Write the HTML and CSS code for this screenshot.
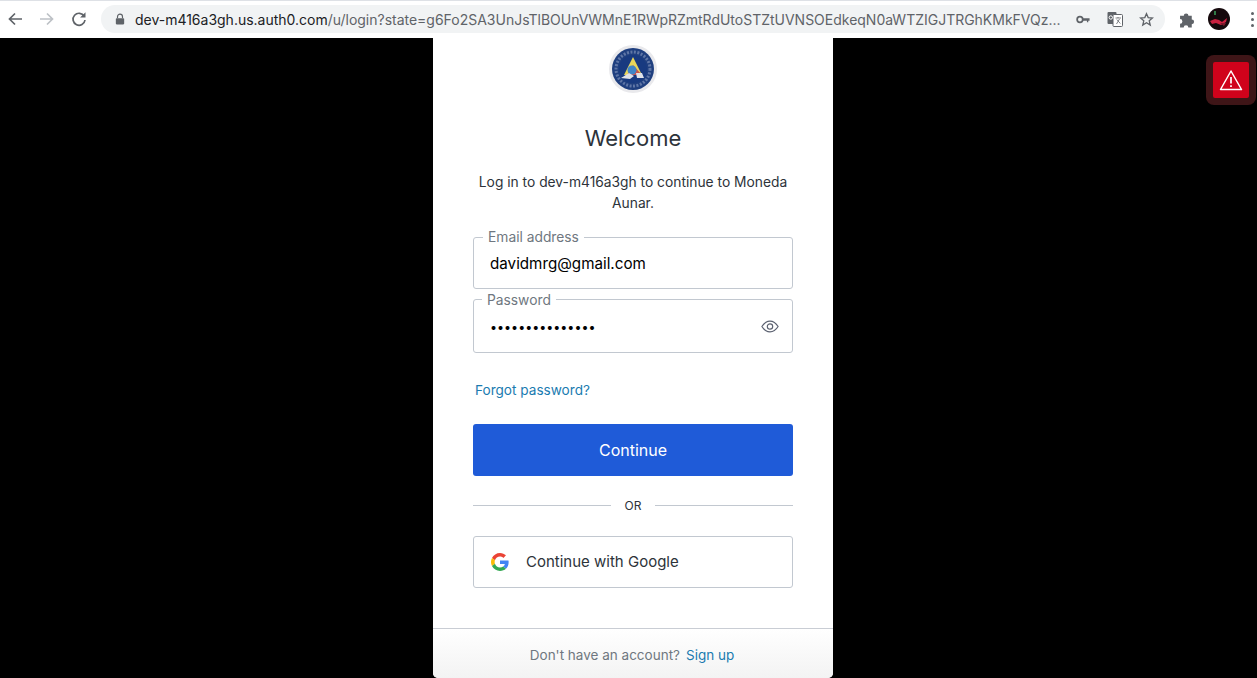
FILE: index.html
```html
<!DOCTYPE html>
<html lang="en">
<head>
    <meta charset="UTF-8">
    <title>Log in | Moneda Aunar</title>
    <link rel="stylesheet" href="styles.css">
</head>
<body>
    <header class="toolbar">
        <div class="nav-buttons">
            <svg class="nav-icon" viewBox="0 0 16 16"><path d="M15 8H2.500M8 2.500 2.500 8 8 13.500" fill="none" stroke="#5f6368" stroke-width="1.700"/></svg>
            <svg class="nav-icon" viewBox="0 0 16 16"><path d="M1 8h12.500M8 2.500 13.500 8 8 13.500" fill="none" stroke="#bdc1c6" stroke-width="1.700"/></svg>
            <svg class="nav-icon" viewBox="0 0 16 16"><path d="M13.200 5.200A6 6 0 1 0 14 9" fill="none" stroke="#5f6368" stroke-width="1.700"/><path d="M14.500 1.200v5.400H9.100z" fill="#5f6368"/></svg>
        </div>
        <div class="omnibox">
            <svg class="lock" viewBox="0 0 12 14"><path d="M3 6V4.200a3 3 0 0 1 6 0V6" fill="none" stroke="#5f6368" stroke-width="1.400"/><rect x="1" y="6" width="10" height="7.500" rx="1" fill="#5f6368"/></svg>
            <div class="url"><span class="url-host">dev-m416a3gh.us.auth0.com</span>/u/login?state=g6Fo2SA3UnJsTlBOUnVWMnE1RWpRZmtRdUtoSTZtUVNSOEdkeqN0aWTZIGJTRGhKMkFVQz...</div>
            <svg class="key" viewBox="0 0 16 10"><circle cx="4.500" cy="5" r="3.200" fill="none" stroke="#5f6368" stroke-width="2"/><path d="M7.500 3.700H15.500V6.300H14V8H12.500V6.300H7.500z" fill="#5f6368"/></svg>
            <svg class="translate" viewBox="0 0 16 16"><rect x="0.500" y="1" width="9" height="12" rx="1" fill="#5f6368"/><rect x="6" y="3.500" width="9.500" height="12" rx="1" fill="#fff" stroke="#5f6368"/><path d="M8.500 7h5.500M11 7v-1M9.500 13l3-5M9.800 8.500l3.500 4" fill="none" stroke="#5f6368" stroke-width=".8"/><circle cx="3.800" cy="6.500" r="1.700" fill="none" stroke="#fff"/></svg>
            <svg class="star" viewBox="0 0 16 16"><path d="M8 1.800 9.800 6l4.600.4-3.500 3 1.100 4.500L8 11.500l-4 2.400 1.100-4.500-3.500-3L6.200 6z" fill="none" stroke="#5f6368" stroke-width="1.400"/></svg>
        </div>
        <svg class="puzzle" viewBox="0 0 16 16"><path d="M1 4.500h3.500a2.200 2.200 0 1 1 4.400 0H12V8a2.200 2.200 0 1 1 0 4.400V15.500H8.800a2.200 2.200 0 1 0-4.400 0H1V12a2.200 2.200 0 1 0 0-4.400z" fill="#5f6368"/></svg>
        <svg class="avatar" viewBox="0 0 22 22"><circle cx="11" cy="11" r="11" fill="#15090c"/><path d="M2 13 7 11l4 1 3 2 5-4-1 4-5 3-5-2-4 1z" fill="#c9203f"/><path d="M6 3h2v4H6z" fill="#2f7a46"/><path d="M12 15l6 0-2 3z" fill="#7c1a2c"/></svg>
        <div class="menu-dots"><span></span><span></span><span></span></div>
    </header>

    <main class="stage">
        <div class="card">
            <svg class="logo" viewBox="0 0 48 48">
                <circle cx="24" cy="24" r="24" fill="#e9e9ec"/>
                <circle cx="24" cy="24" r="21" fill="#1f3f7f"/>
                <circle cx="24" cy="24" r="17" fill="none" stroke="#5f76a6" stroke-width="3" stroke-dasharray="2 1.500"/>
                <circle cx="24" cy="24" r="14" fill="#183a80"/>
                <path d="M24 12 33 30H15z" fill="#e8d65a"/>
                <path d="M24 20 33 30H18z" fill="#c9534f"/>
                <circle cx="23" cy="25" r="4.500" fill="#3f86c8"/>
                <path d="M12 33l8-5 5 3-4 3zM27 28h6l2 5h-7z" fill="#dfe2e8"/>
            </svg>
            <h1 class="title">Welcome</h1>
            <p class="intro">Log in to dev-m416a3gh to continue to Moneda Aunar.</p>

            <div class="field field-email">
                <label class="field-label" for="email">Email address</label>
                <input class="field-input" id="email" type="text" value="davidmrg@gmail.com">
            </div>
            <div class="field field-password">
                <label class="field-label" for="password">Password</label>
                <input class="field-input field-secret" id="password" type="password" value="aaaaaaaaaaaaaaa">
                <svg class="eye" viewBox="0 0 20 14"><path d="M1 7c2.500-4 5.500-6 9-6s6.500 2 9 6c-2.500 4-5.500 6-9 6s-6.500-2-9-6z" fill="none" stroke="#5b6170" stroke-width="1.300"/><circle cx="10" cy="7" r="3" fill="none" stroke="#5b6170" stroke-width="1.300"/></svg>
            </div>

            <a class="forgot" href="#">Forgot password?</a>
            <button class="continue" type="button">Continue</button>

            <div class="divider"><span>OR</span></div>

            <button class="google" type="button">
                <svg class="google-icon" viewBox="0 0 48 48">
                    <path fill="#EA4335" d="M24 9.500c3.900 0 6.900 1.600 9.100 3.600l6.800-6.800C35.800 2.500 30.400 0 24 0 14.600 0 6.500 5.400 2.600 13.200l7.900 6.200C12.400 13.700 17.700 9.500 24 9.500z"/>
                    <path fill="#4285F4" d="M47 24.500c0-1.600-.1-3.100-.4-4.500H24v9h13c-.6 3-2.200 5.500-4.800 7.200l7.700 6c4.500-4.200 7.100-10.300 7.100-17.700z"/>
                    <path fill="#FBBC05" d="M10.500 28.600c-.5-1.400-.8-3-.8-4.600s.3-3.200.8-4.600l-7.900-6.200C.9 16.500 0 20.100 0 24s.9 7.500 2.600 10.800z"/>
                    <path fill="#34A853" d="M24 48c6.500 0 11.900-2.100 15.900-5.800l-7.700-6c-2.100 1.400-4.900 2.300-8.200 2.300-6.300 0-11.600-4.200-13.500-9.900l-7.900 6.200C6.500 42.600 14.600 48 24 48z"/>
                </svg>
                <span class="google-text">Continue with Google</span>
            </button>

            <footer class="card-footer">
                <span>Don't have an account?</span>
                <a href="#">Sign up</a>
            </footer>
        </div>
    </main>

    <div class="alert-badge">
        <div class="alert-inner">
            <svg viewBox="0 0 24 22"><path d="M12 2 22.500 20.500H1.500z" fill="none" stroke="#fff" stroke-width="1.500" stroke-linejoin="round"/><path d="M12 8v6.500M12 16.300v1.700" stroke="#fff" stroke-width="1.700"/></svg>
        </div>
    </div>
</body>
</html>
```

FILE: styles.css
```css
* {
    box-sizing: border-box;
}
html, body {
    height: 100%;
}
body {
    margin: 0;
    font-family: 'Inter', 'Liberation Sans', sans-serif;
    background: #000;
    color: #2d333a;
    overflow: hidden;
    display: flex;
    flex-direction: column;
}

/* browser bar */
.toolbar {
    height: 38px;
    flex: none;
    background: #fff;
    border-top: 1px solid #dee1e6;
    display: flex;
    align-items: center;
    padding: 0 0 1px 7px;
}
.nav-buttons {
    display: flex;
    gap: 16px;
    margin-right: 14px;
}
.nav-icon {
    width: 16px;
    height: 16px;
}
.omnibox {
    width: 1064px;
    height: 28px;
    background: #f1f3f4;
    border-radius: 14px;
    display: flex;
    align-items: center;
    padding-left: 14px;
}
.lock {
    width: 10px;
    height: 12px;
    flex: none;
}
.url {
    margin-left: 10px;
    width: 926px;
    flex: none;
    font-size: 14px;
    letter-spacing: -0.01px;
    color: #5f6368;
    white-space: nowrap;
    overflow: hidden;
}
.url-host {
    color: #202124;
}
.key {
    width: 14px;
    height: 9px;
    margin-left: 15px;
    flex: none;
}
.translate {
    width: 16px;
    height: 16px;
    margin-left: 17px;
    flex: none;
}
.star {
    width: 15px;
    height: 15px;
    margin-left: 16px;
    flex: none;
}
.puzzle {
    width: 17px;
    height: 17px;
    margin-left: 14px;
    flex: none;
}
.avatar {
    width: 22px;
    height: 22px;
    margin-left: 12px;
    flex: none;
}
.menu-dots {
    margin-left: 21px;
    display: flex;
    flex-direction: column;
    gap: 3px;
}
.menu-dots span {
    width: 3px;
    height: 3px;
    border-radius: 50%;
    background: #5f6368;
}

/* login card */
.stage {
    flex: 1;
    display: flex;
    justify-content: center;
    min-height: 0;
    padding-left: 9px;
}
.card {
    width: 400px;
    height: 640px;
    background: #fff;
    border-radius: 0 0 5px 5px;
    padding: 7px 40px 0;
    display: flex;
    flex-direction: column;
}
.logo {
    width: 48px;
    height: 48px;
    align-self: center;
    flex: none;
}
.title {
    margin: 30px 0 0;
    height: 30px;
    font-size: 22px;
    line-height: 30px;
    font-weight: 400;
    text-align: center;
}
.intro {
    margin: 19px 0 0;
    font-size: 13.8px;
    line-height: 21px;
    text-align: center;
}
.field {
    position: relative;
    flex: none;
    border: 1px solid #c2c8d0;
    border-radius: 3px;
}
.field-email {
    height: 52px;
    margin-top: 23px;
}
.field-password {
    height: 54px;
    margin-top: 10px;
}
.field-label {
    position: absolute;
    top: -9px;
    left: 9px;
    padding: 0 5px;
    background: #fff;
    font-size: 13.8px;
    line-height: 16px;
    color: #6f7780;
}
.field-password .field-label {
    top: -8px;
    left: 8px;
}
.field-input {
    display: block;
    width: 100%;
    height: 100%;
    border: 0;
    outline: none;
    background: none;
    padding: 0 16px;
    font-family: inherit;
    font-size: 15.2px;
    color: #000;
}
.field-secret {
    padding-top: 2px;
    font-size: 12.5px;
}
.eye {
    position: absolute;
    top: 20px;
    right: 13px;
    width: 18px;
    height: 13px;
}
.forgot {
    margin: 28px 0 0 2px;
    font-size: 13.6px;
    line-height: 18px;
    color: #1a7bb0;
    text-decoration: none;
}
.continue {
    flex: none;
    height: 52px;
    margin-top: 25px;
    border: 0;
    border-radius: 3px;
    background: #1f5bd8;
    color: #fff;
    font-family: inherit;
    font-size: 16px;
}
.divider {
    margin-top: 22px;
    height: 16px;
    display: flex;
    align-items: center;
    gap: 14px;
    font-size: 12px;
    line-height: 16px;
}
.divider::before, .divider::after {
    content: "";
    flex: 1;
    height: 1px;
    background: #c2c8d0;
    margin-top: -1px;
}
.google {
    flex: none;
    height: 52px;
    margin-top: 22px;
    border: 1px solid #c2c8d0;
    border-radius: 3px;
    background: #fff;
    color: #2d333a;
    font-family: inherit;
    font-size: 15px;
    display: flex;
    align-items: center;
    padding: 0 0 0 17px;
}
.google-icon {
    width: 18px;
    height: 18px;
    margin-right: 17px;
}
.google-text {
    margin-bottom: 2px;
}
.card-footer {
    margin: 40px -40px 0;
    height: 50px;
    padding: 2px 2px 0 0;
    border-top: 1px solid #c9cdd4;
    border-radius: 0 0 5px 5px;
    background: linear-gradient(#fff, #f3f3f3);
    display: flex;
    justify-content: center;
    align-items: center;
    gap: 6px;
    font-size: 13.5px;
    color: #6f7780;
}
.card-footer a {
    color: #1a7bb0;
    text-decoration: none;
}

/* floating warning */
.alert-badge {
    position: absolute;
    top: 55px;
    left: 1206px;
    width: 50px;
    height: 50px;
    padding: 7px;
    border-radius: 8px;
    background: #3e1517;
}
.alert-inner {
    width: 36px;
    height: 36px;
    border-radius: 2px;
    background: #d0021b;
    display: flex;
    justify-content: center;
    align-items: center;
}
.alert-inner svg {
    width: 24px;
    height: 22px;
}
```
